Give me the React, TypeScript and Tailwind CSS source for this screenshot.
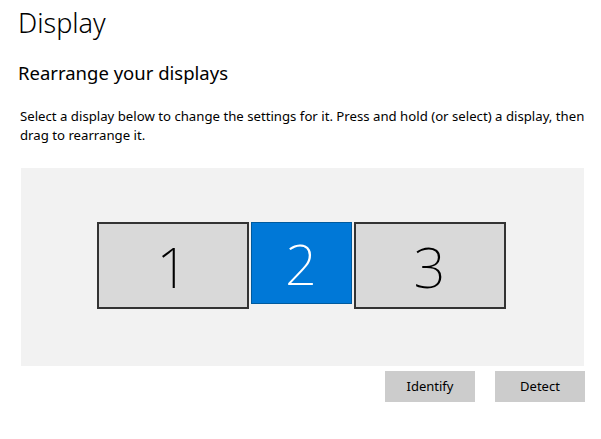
import React from "react";

export default function App() {
  const font = { fontFamily: '"Noto Sans", "Open Sans", sans-serif' };
  return (
    <div className="w-[601px] h-[439px] bg-white text-black overflow-hidden" style={font}>
      <div className="pl-[18px] pt-[4px]">
        <h1 className="text-[27px] font-light leading-[38px] text-black">Display</h1>
        <h2 className="mt-[18px] text-[18.5px] font-normal leading-[26px] text-black">Rearrange your displays</h2>
        <p className="mt-[21px] pl-[2px] w-[575px] text-[13.2px] leading-[19px] text-black">
          Select a display below to change the settings for it. Press and hold (or select) a display, then drag to rearrange it.
        </p>
      </div>
      <div className="ml-[21px] mt-[23px] w-[563px] h-[198px] bg-[#f2f2f2] flex justify-center pt-[54px] pr-[3px]">
        <div className="flex items-start gap-[2px]">
          <div className="w-[152px] h-[87px] bg-[#d9d9d9] border-2 border-[#333333] flex items-center justify-center">
            <span className="text-[56px] font-extralight leading-none text-black">1</span>
          </div>
          <div className="w-[101px] h-[82px] bg-[#0078d7] border border-[#005a9e] flex items-center justify-center">
            <span className="text-[56px] font-extralight leading-none text-white">2</span>
          </div>
          <div className="w-[152px] h-[87px] bg-[#d9d9d9] border-2 border-[#333333] flex items-center justify-center">
            <span className="text-[56px] font-extralight leading-none text-black">3</span>
          </div>
        </div>
      </div>
      <div className="flex justify-end gap-[20px] mt-[5px] w-[585px]">
        <button className="w-[90px] h-[31px] bg-[#cccccc] text-[13px] text-black flex items-center justify-center">Identify</button>
        <button className="w-[90px] h-[31px] bg-[#cccccc] text-[13px] text-black flex items-center justify-center">Detect</button>
      </div>
    </div>
  );
}
